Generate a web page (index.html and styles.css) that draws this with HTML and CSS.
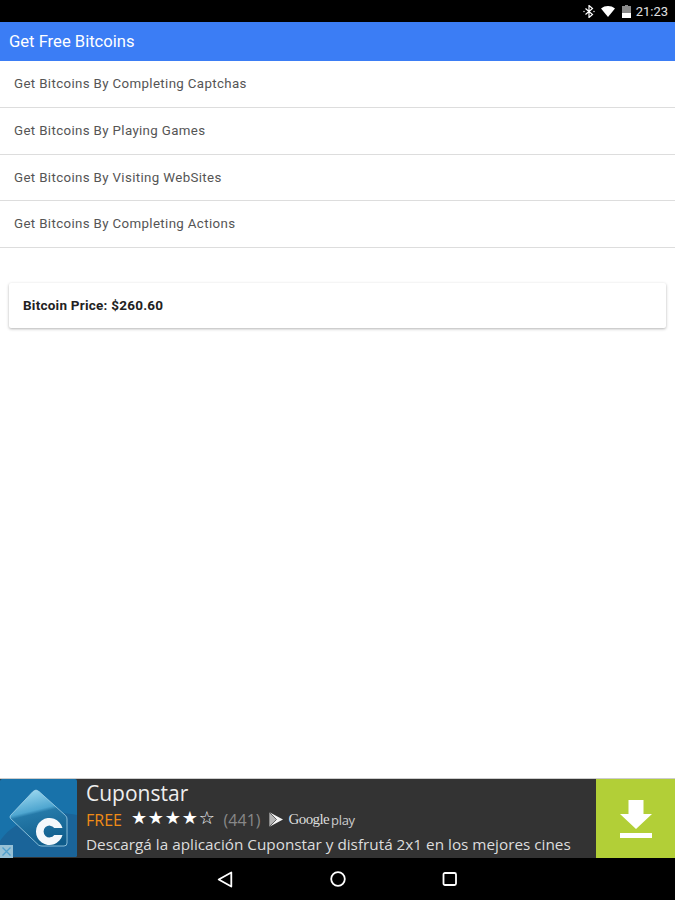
FILE: index.html
```html
<!DOCTYPE html>
<html lang="en">
<head>
<meta charset="utf-8">
<title>Get Free Bitcoins</title>
<link rel="stylesheet" href="styles.css">
</head>
<body>
<div class="screen">
  <div class="status">
    <svg class="st-bt" width="12" height="13" viewBox="0 0 12 13"><path d="M2.500 3.500l7 6-3.500 3V.5l3.500 3-7 6" fill="none" stroke="#fff" stroke-width="1.200"/><circle cx="1" cy="6.500" r=".8" fill="#ccc"/><circle cx="11" cy="6.500" r=".8" fill="#ccc"/></svg>
    <svg class="st-wifi" width="14" height="11" viewBox="0 0 14 11"><path d="M0 2.500C4-.8 10-.8 14 2.500L7 11z" fill="#fff"/></svg>
    <svg class="st-bat" width="9" height="13" viewBox="0 0 9 13"><path d="M3 0h3v1h3v12H0V1h3z" fill="#8a8a8a"/><path d="M0 8h9v5H0z" fill="#fff"/></svg>
    <span class="st-time">21:23</span>
  </div>
  <header class="appbar">Get Free Bitcoins</header>
  <ul class="menu">
    <li class="menu-item">Get Bitcoins By Completing Captchas</li>
    <li class="menu-item">Get Bitcoins By Playing Games</li>
    <li class="menu-item">Get Bitcoins By Visiting WebSites</li>
    <li class="menu-item">Get Bitcoins By Completing Actions</li>
  </ul>
  <div class="card">Bitcoin Price: $260.60</div>
  <main class="spacer"></main>
  <aside class="ad">
    <div class="ad-icon">
      <svg class="ad-logo" width="77" height="78" viewBox="0 0 77 78">
        <defs>
          <linearGradient id="tag" x1="0.350" y1="0" x2="0.600" y2="1">
            <stop offset="0" stop-color="#9bd8f0"/>
            <stop offset="0.360" stop-color="#4fa6d0"/>
            <stop offset="0.420" stop-color="#2579a8"/>
            <stop offset="1" stop-color="#0f5c8b"/>
          </linearGradient>
        </defs>
        <rect width="77" height="78" rx="2" fill="#1872aa"/>
        <path d="M0 78V62C14 40 50 30 77 36V76Q77 78 75 78z" fill="#1a6499"/>
        <path d="M10.500 36.500L33 12.500Q36 9.500 39 12.500L65.500 36.500Q67 38 67 40V64Q67 67 64 67H42Q40 67 38.500 66L10.500 39.500Q9.500 38 10.500 36.500z" fill="url(#tag)" stroke="#a5d3e8" stroke-width="0.800"/>
        <path d="M62.500 49A13.500 13.500 0 1 0 62.500 56H54.250A5.900 5.900 0 1 1 54.250 49z" fill="#f4f8fb"/>
      </svg>
      <svg class="ad-x" width="13" height="13" viewBox="0 0 13 13"><rect width="13" height="13" fill="#97c1d6"/><path d="M2.500 2.500l8 8M10.500 2.500l-8 8" stroke="#4f9fcc" stroke-width="1.300"/></svg>
    </div>
    <div class="ad-body">
      <div class="ad-title">Cuponstar</div>
      <div class="ad-meta">
        <span class="ad-free">FREE</span>
        <span class="ad-stars">★★★★☆</span>
        <span class="ad-count">(441)</span>
        <svg class="ad-play" width="16" height="17" viewBox="0 0 16 17"><path d="M1 1l14 7.500L1 16z" fill="#f4f4f4"/><path d="M1 1l7.500 7.500L1 16z" fill="#b5b5b5" stroke="#333" stroke-width=".7"/></svg>
        <span class="ad-gp">Google</span>
        <span class="ad-gp-play">play</span>
      </div>
      <div class="ad-desc">Descargá la aplicación Cuponstar y disfrutá 2x1 en los mejores cines</div>
    </div>
    <div class="ad-cta">
      <svg width="32" height="38" viewBox="0 0 32 38"><path d="M8.500 0h15v14H32L16 29 0 14h8.500z" fill="#fff"/><rect y="33" width="32" height="5" fill="#fff"/></svg>
    </div>
  </aside>
  <nav class="navbar">
    <svg width="16" height="17" viewBox="0 0 16 17"><path d="M14.300 1.500v14L1.700 8.500z" fill="none" stroke="#fff" stroke-width="1.800" stroke-linejoin="round"/></svg>
    <svg width="16" height="16" viewBox="0 0 16 16"><circle cx="8" cy="8" r="6.800" fill="none" stroke="#fff" stroke-width="1.800"/></svg>
    <svg width="16" height="14" viewBox="0 0 16 14"><rect x="1.500" y="1" width="12.500" height="12" rx="1.500" fill="none" stroke="#fff" stroke-width="1.800"/></svg>
  </nav>
</div>
</body>
</html>
```
FILE: styles.css
```css
* { box-sizing: border-box; }
html, body { margin: 0; padding: 0; }
body { background: #fff; font-family: Roboto, sans-serif; }
.screen { width: 675px; height: 900px; display: flex; flex-direction: column; overflow: hidden; }
.status { height: 22px; background: #000; display: flex; align-items: center; justify-content: flex-end; padding-right: 7px; color: #fff; flex: none; }
.st-bt { margin-right: 6px; }
.st-wifi { margin-right: 7px; }
.st-bat { margin-right: 5px; }
.st-time { font-size: 13px; color: #e0e0e0; }
.appbar { height: 39px; background: #3b7df5; color: #fff; font-size: 16.600px; line-height: 39px; padding-left: 9px; flex: none; }
.menu { list-style: none; margin: 0; padding: 0; flex: none; }
.menu-item { height: 46.750px; line-height: 46px; border-bottom: 1px solid #ddd; padding-left: 14px; font-size: 13.300px; color: #555; letter-spacing: 0.360px; }
.card { margin: 35px 9px 0; height: 45px; line-height: 45px; padding-left: 14px; background: #fff; font-size: 13.500px; font-weight: 700; color: #222; letter-spacing: 0.240px; box-shadow: 0 1px 3px rgba(0,0,0,.3); border-radius: 2px; flex: none; }
.spacer { flex: 1; }
.ad { height: 80px; flex: none; background: #333; border-top: 1px solid #ccc; display: flex; }
.ad-icon { width: 77px; height: 79px; position: relative; flex: none; }
.ad-logo { display: block; }
.ad-x { position: absolute; left: 0; bottom: 0; display: block; }
.ad-body { flex: 1; padding-left: 9px; font-family: "Open Sans", sans-serif; color: #eee; white-space: nowrap; overflow: hidden; }
.ad-title { font-size: 21px; line-height: 28px; }
.ad-meta { display: flex; align-items: center; height: 25px; }
.ad-free { font-size: 16px; color: #f08c16; margin-right: 9px; }
.ad-stars { font-family: "DejaVu Sans", sans-serif; font-size: 18px; line-height: 20px; color: #fff; margin-right: 8px; letter-spacing: 0.800px; transform: translateY(-2px); }
.ad-count { font-size: 16px; color: #888; margin-right: 7px; }
.ad-play { margin-right: 5px; }
.ad-gp { font-family: "Liberation Serif", serif; font-size: 15px; color: #ddd; letter-spacing: -0.600px; margin-right: 2px; }
.ad-gp-play { font-size: 13px; color: #ccc; letter-spacing: -0.300px; }
.ad-desc { font-size: 15.300px; line-height: 24px; color: #ddd; }
.ad-cta { width: 79px; flex: none; background: #b2cf37; display: flex; align-items: center; justify-content: center; }
.navbar { height: 42px; flex: none; background: #000; display: flex; align-items: center; justify-content: center; gap: 96.500px; }
```
